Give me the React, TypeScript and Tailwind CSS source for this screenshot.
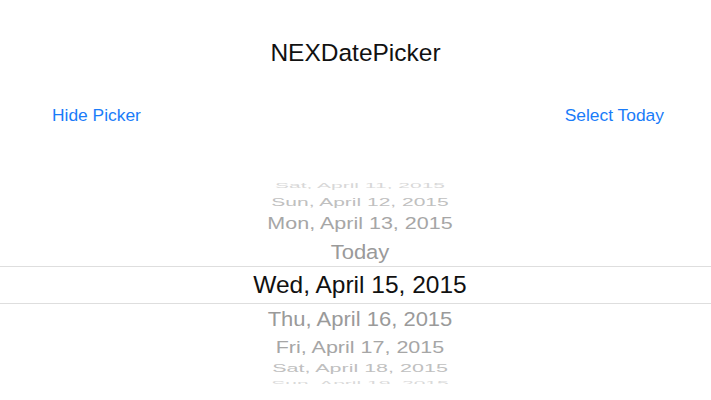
export default function App() {
  const rows = [
    { label: "Sat, April 11, 2015", h: "h-[11px]", text: "text-[21px] scale-y-[0.3] -translate-y-[3px] text-[#d8d8d8]" },
    { label: "Sun, April 12, 2015", h: "h-[15px]", text: "text-[21px] scale-y-[0.52] translate-y-[1px] text-[#c0c0c0]" },
    { label: "Mon, April 13, 2015", h: "h-[26px]", text: "text-[21.5px] scale-y-[0.77] translate-y-[2px] text-[#a6a6a6]" },
    { label: "Today", h: "h-[31px]", text: "text-[22px] scale-y-[0.92] translate-y-[2px] text-[#9a9a9a]" },
  ]
  const below = [
    { label: "Thu, April 16, 2015", h: "h-[30px]", text: "text-[22px] scale-y-[0.88] translate-y-[1px] text-[#9a9a9a]" },
    { label: "Fri, April 17, 2015", h: "h-[26px]", text: "text-[21.5px] scale-y-[0.78] translate-y-[1px] text-[#a6a6a6]" },
    { label: "Sat, April 18, 2015", h: "h-[16px]", text: "text-[21.5px] scale-y-[0.5] translate-y-[1px] text-[#c0c0c0]" },
    { label: "Sun, April 19, 2015", h: "h-[10px]", text: "text-[21px] scale-y-[0.3] translate-y-[2px] text-[#dadada]" },
  ]

  return (
    <div className="w-[711px] h-[400px] bg-white overflow-hidden font-['Liberation_Sans',Arial,sans-serif]">
      {/* Title */}
      <div className="pt-[38px] text-center text-[24.5px] leading-[30px] text-[#111]">NEXDatePicker</div>

      {/* Buttons */}
      <div className="mt-[37px] flex justify-between pl-[52px] pr-[47px] text-[17.4px] leading-[20px] text-[#1a7cf9]">
        <button>Hide Picker</button>
        <button>Select Today</button>
      </div>

      {/* Wheel */}
      <div className="mt-[58px] h-[201px] overflow-hidden flex flex-col">
        {rows.map((r) => (
          <div key={r.label} className={`${r.h} flex items-center justify-center pl-[9px] overflow-hidden shrink-0`}>
            <span className={`${r.text} leading-none whitespace-nowrap inline-block`}>{r.label}</span>
          </div>
        ))}
        <div className="h-[38px] shrink-0 border-y border-[#dedede] flex items-center justify-center pl-[9px]">
          <span className="text-[24.5px] leading-none text-[#111]">Wed, April 15, 2015</span>
        </div>
        {below.map((r) => (
          <div key={r.label} className={`${r.h} flex items-center justify-center pl-[9px] overflow-hidden shrink-0`}>
            <span className={`${r.text} leading-none whitespace-nowrap inline-block`}>{r.label}</span>
          </div>
        ))}
      </div>
    </div>
  )
}
